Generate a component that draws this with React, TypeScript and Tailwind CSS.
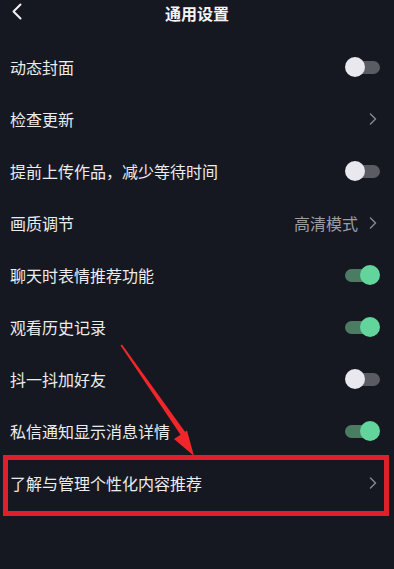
import React from "react";

type Row = { label: string; kind: "on" | "off" | "chev"; value?: string };

const rows: Row[] = [
  { label: "动态封面", kind: "off" },
  { label: "检查更新", kind: "chev" },
  { label: "提前上传作品，减少等待时间", kind: "off" },
  { label: "画质调节", kind: "chev", value: "高清模式" },
  { label: "聊天时表情推荐功能", kind: "on" },
  { label: "观看历史记录", kind: "on" },
  { label: "抖一抖加好友", kind: "off" },
  { label: "私信通知显示消息详情", kind: "on" },
];

function Toggle({ on }: { on: boolean }) {
  return (
    <div className="relative w-[35px] h-[20px]">
      {on ? (
        <>
          <div className="absolute left-0 right-[10px] top-[3.5px] h-[13px] rounded-full bg-[#4c7b64]" />
          <div className="absolute right-0 top-0 w-[20px] h-[20px] rounded-full bg-[#62d49c]" />
        </>
      ) : (
        <>
          <div className="absolute left-[8px] right-0 top-[3.5px] h-[13px] rounded-full bg-[#5a5b63]" />
          <div className="absolute left-0 top-0 w-[20px] h-[20px] rounded-full bg-[#e8e8ee]" />
        </>
      )}
    </div>
  );
}

function Chev() {
  return (
    <svg width="8" height="12" viewBox="0 0 8 12" className="block">
      <path d="M1.5 1 L6.5 6 L1.5 11" fill="none" stroke="#85868d" strokeWidth="1.5" strokeLinecap="round" strokeLinejoin="round" />
    </svg>
  );
}

export default function App() {
  const font = { fontFamily: '"Noto Sans CJK SC", "Noto Sans", sans-serif' };
  return (
    <div className="relative w-[394px] h-[569px] bg-[#161821] overflow-hidden" style={font}>
      <div className="relative h-[25px] flex items-center justify-center">
        <svg width="12" height="18" viewBox="0 0 12 18" className="absolute left-[11px] top-[3px]">
          <path d="M9.5 1.5 L2.5 8.5 L9.5 15.5" fill="none" stroke="#f2f2f4" strokeWidth="2" strokeLinecap="round" strokeLinejoin="round" />
        </svg>
        <span className="text-[16px] font-bold text-[#f4f4f6] leading-none">通用设置</span>
      </div>
      <div className="mt-[16px] flex flex-col">
        {rows.map((r) => (
          <div key={r.label} className="h-[52px] flex items-center justify-between pl-[10px] pr-[14px]">
            <span className="text-[16px] text-[#ececee] leading-none">{r.label}</span>
            {r.kind === "chev" ? (
              <div className="flex items-center gap-[11px] pr-[3px]">
                {r.value && <span className="text-[16px] text-[#9d9ea4] leading-none">{r.value}</span>}
                <Chev />
              </div>
            ) : (
              <Toggle on={r.kind === "on"} />
            )}
          </div>
        ))}
        <div className="h-[52px] flex items-center justify-between pl-[10px] pr-[17px]">
          <span className="text-[16px] text-[#ececee] leading-none">了解与管理个性化内容推荐</span>
          <Chev />
        </div>
      </div>
      <div className="absolute left-[3px] top-[455px] w-[386px] h-[61px] border-[5px] border-[#de202b]" />
      <svg width="394" height="569" className="absolute left-0 top-0 pointer-events-none">
        <polygon points="120.5,345.5 122,344.5 185.5,432.5 181,435.5" fill="#f0262a" />
        <polygon points="174,439 187,430.5 194,456" fill="#f0262a" />
      </svg>
    </div>
  );
}
